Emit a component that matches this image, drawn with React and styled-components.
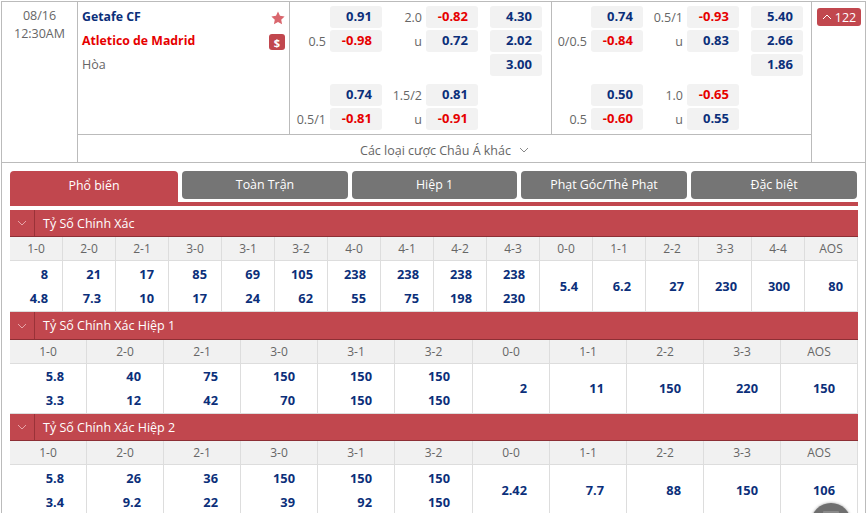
import React from "react";
import styled, { createGlobalStyle } from "styled-components";

const Global = createGlobalStyle`
  html, body { margin: 0; padding: 0; background: #fff; height: 100%; overflow: hidden; }
  body { font-family: "Open Sans", "Liberation Sans", sans-serif; }
  * { box-sizing: border-box; }
`;

const Page = styled.div`
  width: 865px;
  height: 512px;
  margin: 1px 0 0 1px;
  border: 1px solid #bbb;
  border-bottom: none;
  overflow: hidden;
`;

const Match = styled.div`
  height: 161px;
  border-bottom: 1px solid #bbb;
  display: flex;
`;

const TimeCol = styled.div`
  width: 76px;
  border-right: 1px solid #bbb;
  padding-top: 5px;
  text-align: center;
  font-size: 12.5px;
  line-height: 18px;
  color: #666;
`;

const MainCol = styled.div`
  width: 734px;
  border-right: 1px solid #bbb;
  display: flex;
  flex-direction: column;
`;

const MarketsRow = styled.div`
  height: 133px;
  display: flex;
  border-bottom: 1px solid #bbb;
`;

const TeamCol = styled.div`
  width: 212px;
  flex-shrink: 0;
  border-right: 1px solid #bbb;
  padding: 2px 4px 0 4px;
`;

const TeamRow = styled.div`
  height: 24px;
  display: flex;
  align-items: center;
  justify-content: space-between;
`;

const TeamName = styled.span`
  font-size: 12.3px;
  font-weight: 700;
  color: ${(p) => p.$color};
`;

const Draw = styled.span`
  font-size: 12.5px;
  color: #666;
`;

const StarIcon = styled.svg`
  margin: 4px 0 0 0;
`;

const Badge = styled.span`
  width: 16px;
  height: 16px;
  border-radius: 3px;
  background: #c1474e;
  color: #fff;
  font-size: 11px;
  font-weight: 700;
  display: flex;
  align-items: center;
  justify-content: center;
  margin-top: 4px;
`;

const OddsCol = styled.div`
  width: ${(p) => p.$width}px;
  flex-shrink: 0;
  border-right: ${(p) => (p.$last ? "none" : "1px solid #bbb")};
  padding-top: 4px;
  display: flex;
  flex-direction: column;
  gap: 8px;
`;

const OddsBlock = styled.div`
  display: grid;
  grid-template-columns: ${(p) => p.$first}px 96px 64px;
  grid-auto-rows: 22px;
  row-gap: 2px;
`;

const OddsCell = styled.div`
  display: flex;
  justify-content: flex-end;
  align-items: center;
  gap: 4px;
`;

const Label = styled.span`
  font-size: 12.5px;
  color: #666;
`;

const Price = styled.span`
  width: 52px;
  height: 22px;
  border-radius: 3px;
  background: #f2f2f2;
  font-size: 13px;
  font-weight: 700;
  line-height: 21px;
  text-align: right;
  padding-right: 10px;
  color: ${(p) => (p.$neg ? "#e60000" : "#0b2f7a")};
`;

const MoreRow = styled.div`
  flex: 1;
  display: flex;
  align-items: center;
  justify-content: center;
  gap: 8px;
  padding-top: 3px;
  font-size: 12.5px;
  color: #666;
`;

const SideCol = styled.div`
  flex: 1;
  padding: 6px 0 0 5px;
`;

const CountBtn = styled.div`
  width: 44px;
  height: 18px;
  border-radius: 3px;
  background: #c1474e;
  color: #fff;
  font-size: 12.5px;
  display: flex;
  align-items: center;
  justify-content: center;
  gap: 3px;
`;

const Content = styled.div`
  padding: 8px 7px 0 8px;
`;

const Tabs = styled.div`
  display: grid;
  grid-template-columns: 168px 166px 165px 166px 166px;
  column-gap: 4px;
  border-bottom: 4px solid #c1474e;
  margin-bottom: 4px;
  padding-bottom: 3px;
`;

const Tab = styled.div`
  height: ${(p) => (p.$active ? "35px" : "28px")};
  margin-bottom: ${(p) => (p.$active ? "-7px" : "0")};
  border-radius: ${(p) => (p.$active ? "4px 4px 0 0" : "4px")};
  background: ${(p) => (p.$active ? "#c1474e" : "#757575")};
  color: #fff;
  font-size: 12.4px;
  text-align: center;
  line-height: ${(p) => (p.$active ? "30px" : "27px")};
`;

const SectionHead = styled.div`
  height: ${(p) => p.$height}px;
  background: #c1474e;
  border-bottom: 1px solid #8d2f35;
  display: flex;
  align-items: center;
  color: #fff;
  font-size: 12.5px;
`;

const Toggle = styled.span`
  width: 25px;
  height: 100%;
  border-right: 1px solid #9a3238;
  display: flex;
  align-items: center;
  justify-content: center;
  margin-right: 8px;
`;

const ScoreGrid = styled.div`
  display: grid;
  grid-template-columns: ${(p) => p.$template};
`;

const ScoreHead = styled.div`
  height: 24px;
  background: #f1f1f1;
  border-right: 1px solid #ddd;
  border-bottom: 1px solid #ddd;
  font-size: 12px;
  color: #666;
  text-align: center;
  line-height: 23px;
`;

const ScoreCell = styled.div`
  height: ${(p) => p.$height}px;
  border-right: 1px solid #ddd;
  border-bottom: 1px solid #ddd;
  display: flex;
  flex-direction: column;
  justify-content: center;
  gap: 6px;
  padding-right: ${(p) => p.$pad}px;
  padding-bottom: ${(p) => p.$lift}px;
  font-size: 12.8px;
  font-weight: 700;
  line-height: 18px;
  color: #0b2f7a;
  text-align: right;
`;

const FloatBtn = styled.div`
  position: fixed;
  left: 811px;
  top: 503px;
  width: 40px;
  height: 40px;
  border-radius: 50%;
  background: #6f6f6f;
  box-shadow: 0 0 3px #999;
  display: flex;
  justify-content: center;
  padding-top: 8px;
`;

const Chevron = ({ color = "#888", up, size = 10 }) => (
  <svg width={size} height={size} viewBox="0 0 10 10" fill="none" stroke={color} strokeWidth="1">
    <path d={up ? "M1 7l4-4 4 4" : "M1 3l4 4 4-4"} />
  </svg>
);

const Star = () => (
  <StarIcon width="14" height="14" viewBox="0 0 24 24" fill="#d9666d">
    <path d="M12 1l3.4 7.3 7.9 1-5.8 5.5 1.5 7.9L12 18.8l-7 3.9 1.5-7.9L.7 9.3l7.9-1z" />
  </StarIcon>
);

const Odds = ({ label, value }) => (
  <OddsCell>
    {label && <Label>{label}</Label>}
    {value && <Price $neg={value.startsWith("-")}>{value}</Price>}
  </OddsCell>
);

const markets = [
  {
    width: 262,
    first: 92,
    rows: [
      [["", "0.91"], ["2.0", "-0.82"], ["", "4.30"]],
      [["0.5", "-0.98"], ["u", "0.72"], ["", "2.02"]],
      [["", ""], ["", ""], ["", "3.00"]],
    ],
    rows2: [
      [["", "0.74"], ["1.5/2", "0.81"], ["", ""]],
      [["0.5/1", "-0.81"], ["u", "-0.91"], ["", ""]],
    ],
  },
  {
    width: 259,
    first: 91,
    rows: [
      [["", "0.74"], ["0.5/1", "-0.93"], ["", "5.40"]],
      [["0/0.5", "-0.84"], ["u", "0.83"], ["", "2.66"]],
      [["", ""], ["", ""], ["", "1.86"]],
    ],
    rows2: [
      [["", "0.50"], ["1.0", "-0.65"], ["", ""]],
      [["0.5", "-0.60"], ["u", "0.55"], ["", ""]],
    ],
  },
];

const wideCols = "repeat(15, 53px) 1fr";
const narrowCols = "repeat(5, 77px) 78px repeat(4, 77px) 1fr";

const sections = [
  {
    title: "Tỷ Số Chính Xác",
    pad: 14,
    cols: wideCols,
    headHeight: 27,
    cellHeight: 51,
    lift: 0,
    heads: ["1-0", "2-0", "2-1", "3-0", "3-1", "3-2", "4-0", "4-1", "4-2", "4-3", "0-0", "1-1", "2-2", "3-3", "4-4", "AOS"],
    cells: [["8", "4.8"], ["21", "7.3"], ["17", "10"], ["85", "17"], ["69", "24"], ["105", "62"], ["238", "55"], ["238", "75"], ["238", "198"], ["238", "230"], ["5.4"], ["6.2"], ["27"], ["230"], ["300"], ["80"]],
  },
  {
    title: "Tỷ Số Chính Xác Hiệp 1",
    pad: 22,
    cols: narrowCols,
    headHeight: 28,
    cellHeight: 50,
    lift: 2,
    heads: ["1-0", "2-0", "2-1", "3-0", "3-1", "3-2", "0-0", "1-1", "2-2", "3-3", "AOS"],
    cells: [["5.8", "3.3"], ["40", "12"], ["75", "42"], ["150", "70"], ["150", "150"], ["150", "150"], ["2"], ["11"], ["150"], ["220"], ["150"]],
  },
  {
    title: "Tỷ Số Chính Xác Hiệp 2",
    pad: 22,
    cols: narrowCols,
    headHeight: 27,
    cellHeight: 51,
    lift: 0,
    heads: ["1-0", "2-0", "2-1", "3-0", "3-1", "3-2", "0-0", "1-1", "2-2", "3-3", "AOS"],
    cells: [["5.8", "3.4"], ["26", "9.2"], ["36", "22"], ["150", "39"], ["150", "92"], ["150", "150"], ["2.42"], ["7.7"], ["88"], ["150"], ["106"]],
  },
];

const tabs = ["Phổ biến", "Toàn Trận", "Hiệp 1", "Phạt Góc/Thẻ Phạt", "Đặc biệt"];

const App = () => {
  return (
    <Page>
      <Global />
      <Match>
        <TimeCol>
          08/16
          <br />
          12:30AM
        </TimeCol>
        <MainCol>
          <MarketsRow>
            <TeamCol>
              <TeamRow>
                <TeamName $color="#0b2f7a">Getafe CF</TeamName>
                <Star />
              </TeamRow>
              <TeamRow>
                <TeamName $color="#e60000">Atletico de Madrid</TeamName>
                <Badge>$</Badge>
              </TeamRow>
              <TeamRow>
                <Draw>Hòa</Draw>
              </TeamRow>
            </TeamCol>
            {markets.map((m, i) => (
              <OddsCol key={i} $width={m.width} $last={i === 1}>
                <OddsBlock $first={m.first}>
                  {m.rows.flat().map(([l, v], j) => (
                    <Odds key={j} label={l} value={v} />
                  ))}
                </OddsBlock>
                <OddsBlock $first={m.first}>
                  {m.rows2.flat().map(([l, v], j) => (
                    <Odds key={j} label={l} value={v} />
                  ))}
                </OddsBlock>
              </OddsCol>
            ))}
          </MarketsRow>
          <MoreRow>
            Các loại cược Châu Á khác
            <Chevron />
          </MoreRow>
        </MainCol>
        <SideCol>
          <CountBtn>
            <Chevron color="#fff" up />
            122
          </CountBtn>
        </SideCol>
      </Match>
      <Content>
        <Tabs>
          {tabs.map((t, i) => (
            <Tab key={t} $active={i === 0}>
              {t}
            </Tab>
          ))}
        </Tabs>
        {sections.map((s) => (
          <div key={s.title}>
            <SectionHead $height={s.headHeight}>
              <Toggle>
                <Chevron color="#e6a5a8" />
              </Toggle>
              {s.title}
            </SectionHead>
            <ScoreGrid $template={s.cols}>
              {s.heads.map((h) => (
                <ScoreHead key={h}>{h}</ScoreHead>
              ))}
              {s.cells.map((c, i) => (
                <ScoreCell key={i} $pad={s.pad} $height={s.cellHeight} $lift={s.lift}>
                  {c.map((v, j) => (
                    <span key={j}>{v}</span>
                  ))}
                </ScoreCell>
              ))}
            </ScoreGrid>
          </div>
        ))}
      </Content>
      <FloatBtn>
        <svg width="16" height="12" viewBox="0 0 16 12">
          <rect width="16" height="12" rx="1" fill="#8a8a8a" />
        </svg>
      </FloatBtn>
    </Page>
  );
};

export default App;
